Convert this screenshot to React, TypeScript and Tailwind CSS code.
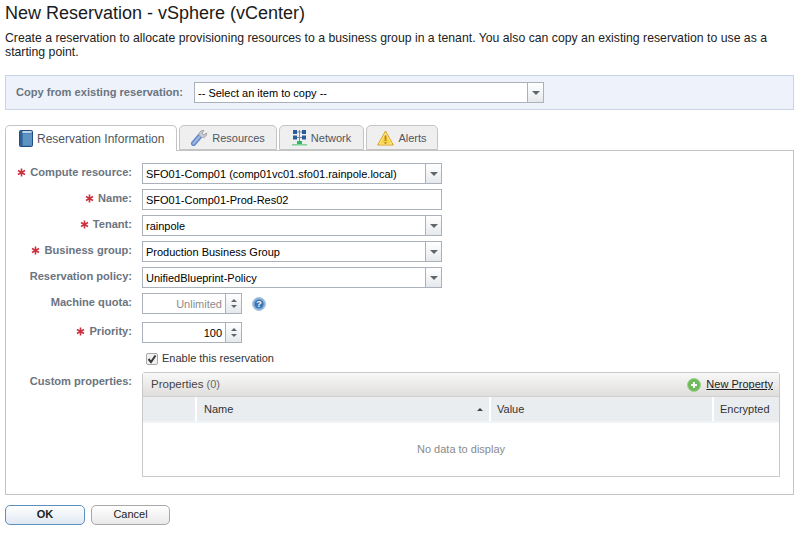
import React from "react";

const BookIcon = () => (
  <svg width="14" height="17" viewBox="0 0 14 17" className="shrink-0">
    <rect x="0.5" y="0.5" width="13" height="16" rx="1" fill="#4f85b8" stroke="#1f4f80" />
    <rect x="1" y="1" width="2.5" height="15" fill="#2f6296" />
    <rect x="3.5" y="1" width="9" height="2" fill="#bcd3e8" />
    <rect x="4" y="4" width="9" height="11" fill="#5f93c4" />
  </svg>
);

const WrenchIcon = () => (
  <svg width="17" height="17" viewBox="0 0 17 17" className="shrink-0">
    <path d="M2.5 14.5 L9 7" stroke="#5f84c4" strokeWidth="5" strokeLinecap="round" />
    <path d="M2.5 14.5 L9 7" stroke="#9db8e4" strokeWidth="2.4" strokeLinecap="round" />
    <path d="M8 6.5 C7.5 3.5 10 1 13 1.6 L11 4 L12.6 5.8 L15.6 4 C16 7 13.5 9 10.5 8.5 Z" fill="#c8cbd0" stroke="#8a8f96" strokeWidth="0.7" />
  </svg>
);

const NetworkIcon = () => (
  <svg width="15" height="17" viewBox="0 0 15 17" className="shrink-0">
    <path d="M7.5 1 V14" stroke="#7d8794" strokeWidth="1" fill="none" />
    <path d="M4 3 H11 M4 8.5 H11" stroke="#7d8794" strokeWidth="1" fill="none" />
    <rect x="1" y="1" width="4" height="4" fill="#2a5c9c" />
    <rect x="10" y="1" width="4" height="4" fill="#2a5c9c" />
    <rect x="1" y="6.5" width="4" height="4" fill="#2a5c9c" />
    <rect x="10" y="6.5" width="4" height="4" fill="#2a5c9c" />
    <rect x="5" y="12" width="5" height="3" fill="#2cb866" />
    <rect x="0" y="15" width="15" height="1.5" fill="#7fcf98" />
  </svg>
);

const WarnIcon = () => (
  <svg width="17" height="16" viewBox="0 0 17 16" className="shrink-0">
    <path d="M8.5 1 L16.3 15 H0.7 Z" fill="#f9d23f" stroke="#d9a21f" strokeLinejoin="round" />
    <path d="M8.5 3 L14.6 14 H2.4 Z" fill="none" stroke="#fdeeb0" strokeWidth="0.8" />
    <rect x="7.6" y="5.5" width="1.8" height="5.5" fill="#b9862a" />
    <rect x="7.6" y="12" width="1.8" height="1.8" fill="#b9862a" />
  </svg>
);

const HelpIcon = () => (
  <svg width="14" height="14" viewBox="0 0 14 14" className="block shrink-0">
    <circle cx="7" cy="7" r="6.5" fill="#8fb3d9" stroke="#a9c4e0" />
    <circle cx="7" cy="7" r="4.6" fill="#3c76b4" />
    <text x="7" y="10" textAnchor="middle" fontSize="9" fontWeight="700" fill="#fff" fontFamily="Liberation Sans, sans-serif">?</text>
  </svg>
);

const PlusIcon = () => (
  <svg width="14" height="14" viewBox="0 0 14 14" className="shrink-0">
    <circle cx="7" cy="7" r="6.5" fill="#6dbb5a" stroke="#a3d295" />
    <path d="M7 4 V10 M4 7 H10" stroke="#fff" strokeWidth="2" />
  </svg>
);

const Star = () => (
  <svg width="9" height="9" viewBox="0 0 9 9" className="mr-[4px] shrink-0">
    <path d="M4.5 0.5 V8.5 M1 2.5 L8 6.5 M8 2.5 L1 6.5" stroke="#c9313f" strokeWidth="1.6" />
  </svg>
);

const Caret = () => (
  <div className="flex w-[16px] shrink-0 items-center justify-center border-l border-[#abb1bb] bg-gradient-to-b from-white to-[#e6e9ec]">
    <div className="h-0 w-0 border-x-[4px] border-t-[4px] border-x-transparent border-t-[#5f666e]" />
  </div>
);

const Select = ({ value, className }: { value: string; className: string }) => (
  <div className={`flex h-[21px] border border-[#abb1bb] bg-white ${className}`}>
    <div className="flex-1 truncate pl-[3px] text-[11px] leading-[20px] text-black">{value}</div>
    <Caret />
  </div>
);

const Spinner = ({ value, disabled }: { value: string; disabled?: boolean }) => (
  <div className="flex h-[21px] w-[100px] border border-[#abb1bb] bg-white">
    <div className={`flex-1 pr-[3px] text-right text-[11px] leading-[20px] ${disabled ? "text-[#8c8c8c]" : "text-black"}`}>{value}</div>
    <div className="flex w-[16px] flex-col items-center justify-center gap-[3px] border-l border-[#abb1bb] bg-gradient-to-b from-white to-[#e6e9ec]">
      <div className="h-0 w-0 border-x-[3px] border-b-[3px] border-x-transparent border-b-[#5f666e]" />
      <div className="h-0 w-0 border-x-[3px] border-t-[3px] border-x-transparent border-t-[#5f666e]" />
    </div>
  </div>
);

const Row = ({ label, required, className, children }: { label: string; required?: boolean; className?: string; children: React.ReactNode }) => (
  <div className={`flex h-[21px] items-start ${className ?? ""}`}>
    <div className="flex w-[126px] items-center justify-end pt-[2px] text-[11.1px] leading-[14px] font-bold text-[#6b7480]">
      {required && <Star />}
      {label}
    </div>
    <div className="ml-[10px] flex items-center">{children}</div>
  </div>
);

const Tab = ({ icon, label, active, width }: { icon: React.ReactNode; label: string; active?: boolean; width: string }) => (
  <div
    className={`flex items-center gap-[4px] rounded-t-[5px] border border-[#c4c4c4] text-[#4f5660] ${width} ${
      active ? "-mb-px h-[26px] border-b-0 bg-white pl-[13px] text-[12px]" : "h-[25px] justify-center bg-[#efefef] text-[11px]"
    }`}
  >
    {icon}
    <span className="pt-[1px]">{label}</span>
  </div>
);

export default function App() {
  return (
    <div className="h-[535px] w-[802px] overflow-hidden bg-white px-[5px] font-['Liberation_Sans',Arial,sans-serif]">
      <h1 className="pt-[1px] text-[18px] leading-[24px] text-[#1a1a1a]">New Reservation - vSphere (vCenter)</h1>
      <p className="mt-[6px] w-[790px] text-[12.25px] leading-[14px] text-[#222]">
        Create a reservation to allocate provisioning resources to a business group in a tenant. You also can copy an existing reservation to use as a starting point.
      </p>

      <div className="mt-[16px] flex h-[35px] w-[789px] items-center border border-[#c9d3e6] bg-[#eef3fb] pl-[10px]">
        <span className="w-[178px] text-[11.1px] font-bold text-[#6b7480]">Copy from existing reservation:</span>
        <Select value="-- Select an item to copy --" className="w-[350px]" />
      </div>

      <div className="mt-[15px] flex gap-[2px]">
        <Tab active width="w-[172px]" icon={<BookIcon />} label="Reservation Information" />
        <Tab width="w-[98px]" icon={<WrenchIcon />} label="Resources" />
        <Tab width="w-[85px]" icon={<NetworkIcon />} label="Network" />
        <Tab width="w-[72px]" icon={<WarnIcon />} label="Alerts" />
      </div>

      <div className="flex h-[345px] w-[789px] flex-col gap-[5px] border border-[#c4c4c4] pt-[12px]">
        <Row label="Compute resource:" required>
          <Select value="SFO01-Comp01 (comp01vc01.sfo01.rainpole.local)" className="w-[300px]" />
        </Row>
        <Row label="Name:" required>
          <div className="h-[21px] w-[300px] border border-[#abb1bb] bg-white pl-[3px] text-[11px] leading-[20px] text-black">SFO01-Comp01-Prod-Res02</div>
        </Row>
        <Row label="Tenant:" required>
          <Select value="rainpole" className="w-[300px]" />
        </Row>
        <Row label="Business group:" required>
          <Select value="Production Business Group" className="w-[300px]" />
        </Row>
        <Row label="Reservation policy:">
          <Select value="UnifiedBlueprint-Policy" className="w-[300px]" />
        </Row>
        <Row label="Machine quota:">
          <Spinner value="Unlimited" disabled />
          <span className="ml-[10px]"><HelpIcon /></span>
        </Row>
        <Row label="Priority:" required className="mt-[3px]">
          <Spinner value="100" />
        </Row>

        <div className="ml-[140px] flex h-[21px] items-center gap-[4px] text-[11px] text-[#333]">
          <div className="flex h-[12px] w-[12px] items-center justify-center rounded-[2px] border border-[#a9a9a9] bg-[#f1f1f1]">
            <svg width="10" height="10" viewBox="0 0 10 10">
              <path d="M1.5 5 L4 8 L8.5 1.5" stroke="#3a3a3a" strokeWidth="2" fill="none" />
            </svg>
          </div>
          Enable this reservation
        </div>

        <div className="-mt-[2px] flex">
          <div className="w-[126px] pt-[2px] text-right text-[11.1px] leading-[14px] font-bold text-[#6b7480]">Custom properties:</div>
          <div className="ml-[10px] h-[105px] w-[638px] rounded-t-[3px] border border-[#c8c8c8] text-[11px]">
            <div className="flex h-[24px] items-center justify-between border-b border-[#d0d0d0] bg-gradient-to-b from-[#f8f8f8] to-[#e0dedc] pl-[8px] pr-[6px]">
              <span>
                <span className="text-[11.5px] text-[#444]">Properties</span> <span className="text-[#666]">(0)</span>
              </span>
              <span className="flex items-center gap-[5px]">
                <PlusIcon />
                <span className="text-[#222] underline">New Property</span>
              </span>
            </div>
            <div className="flex h-[26px] border-b-2 border-[#f2f4f6] bg-[#e9edf0] text-[#333]">
              <div className="w-[54px] border-r-2 border-white" />
              <div className="flex w-[294px] items-center justify-between border-r-2 border-white pl-[7px] pr-[6px]">
                Name
                <div className="h-0 w-0 border-x-[3px] border-b-[3px] border-x-transparent border-b-[#444]" />
              </div>
              <div className="flex w-[223px] items-center border-r-2 border-white pl-[6px]">Value</div>
              <div className="flex flex-1 items-center pl-[6px]">Encrypted</div>
            </div>
            <div className="pt-[18px] text-center text-[#8a8a8a]">No data to display</div>
          </div>
        </div>
      </div>

      <div className="mt-[10px] flex gap-[6px]">
        <button className="h-[20px] w-[80px] rounded-[5px] border border-[#5f8fbd] bg-gradient-to-b from-white to-[#dfe8f2] pb-[1px] text-[11px] font-bold text-[#222]">OK</button>
        <button className="h-[20px] w-[79px] rounded-[5px] border border-[#a8a8a8] bg-gradient-to-b from-white to-[#e9e9e9] pb-[1px] text-[11px] text-[#222]">Cancel</button>
      </div>
    </div>
  );
}
